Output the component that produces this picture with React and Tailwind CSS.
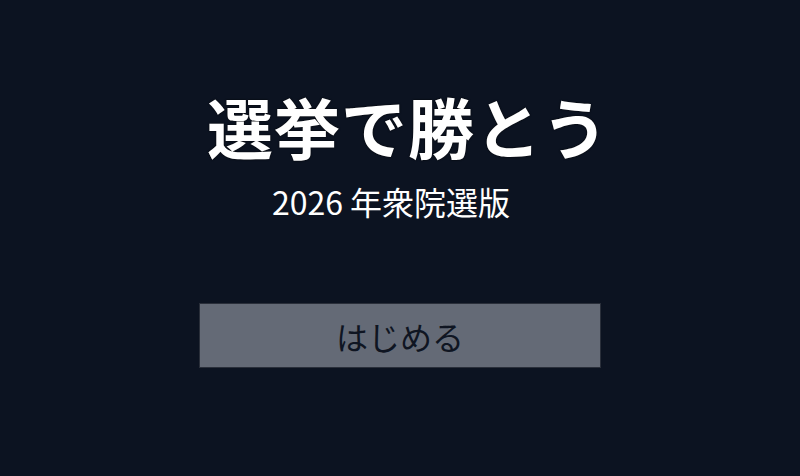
import React from 'react'

export default function App() {
  return (
    <div
      className="w-[800px] h-[476px] bg-[#0c1321] flex flex-col items-center pt-[92px]"
      style={{ fontFamily: '"Noto Sans CJK JP", "Noto Sans", sans-serif' }}
    >
      <h1 className="ml-[16px] text-[66px] leading-none font-bold tracking-[1px] text-white [text-shadow:0_0_2px_#000]">
        選挙で勝とう
      </h1>
      <p className="mt-[27px] mr-[18px] text-[32px] leading-none text-white">2026 年衆院選版</p>
      <button className="mt-[86px] w-[402px] h-[65px] bg-[#646a76] border border-[#2a2f3a] text-[32px] text-[#0f1522] flex items-center justify-center">
        はじめる
      </button>
    </div>
  )
}
